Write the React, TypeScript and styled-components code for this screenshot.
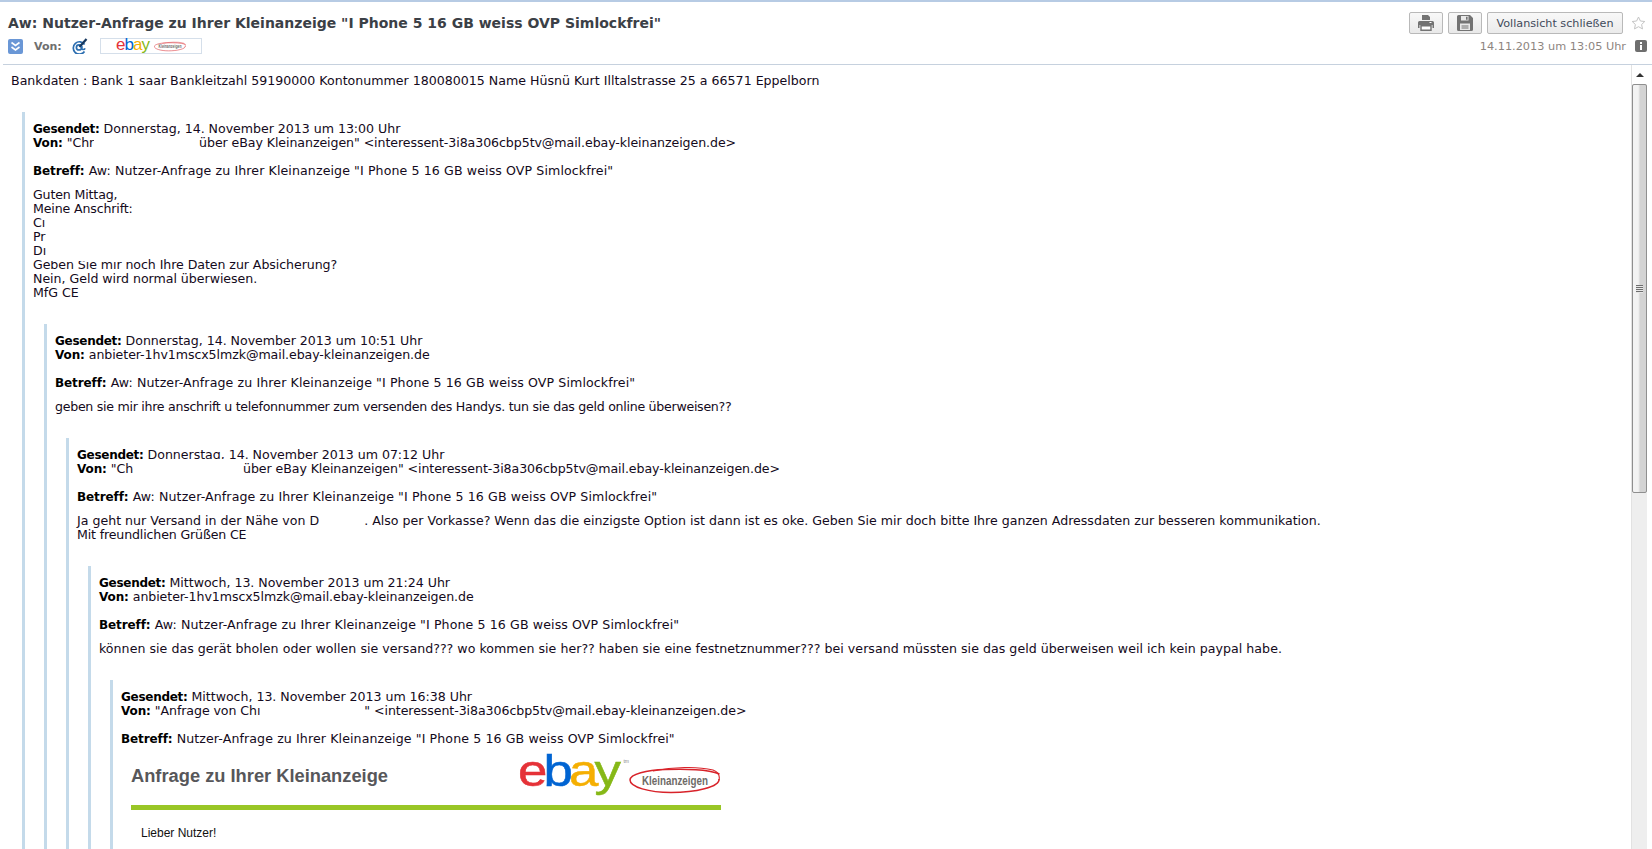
import React from "react";
import styled, { createGlobalStyle } from "styled-components";

const Global = createGlobalStyle`
  html, body { margin: 0; padding: 0; height: 100%; overflow: hidden; background: #fff; }
  #root { height: 100%; }
`;

const Page = styled.div`
  width: 1652px;
  height: 849px;
  display: flex;
  flex-direction: column;
  overflow: hidden;
  background: #fff;
  border-top: 2px solid #b7cbe4;
  box-sizing: border-box;
  font-family: "DejaVu Sans", Verdana, sans-serif;
  color: #111;
`;

const Header = styled.header`
  height: 63px;
  margin-left: 3px;
  padding: 10px 5px 0 5px;
  box-sizing: border-box;
  border-bottom: 1px solid #c6d1de;
  display: flex;
  flex-direction: column;
  flex: none;
`;

const TitleRow = styled.div`
  display: flex;
  align-items: center;
  justify-content: space-between;
  height: 22px;
`;

const Title = styled.h1`
  margin: 0;
  font-size: 14px;
  line-height: 22px;
  font-weight: 700;
  color: #3b4046;
`;

const Actions = styled.div`
  display: flex;
  align-items: center;
  gap: 5px;
  padding-right: 1px;
`;

const IconButton = styled.button`
  width: 34px;
  height: 22px;
  padding: 0;
  display: flex;
  align-items: center;
  justify-content: center;
  border: 1px solid #b9b9b9;
  border-radius: 2px;
  background: linear-gradient(#f8f8f8, #e9e9e9);
`;

const TextButton = styled.button`
  height: 22px;
  width: 136px;
  padding: 0;
  border: 1px solid #b9b9b9;
  border-radius: 2px;
  background: linear-gradient(#f8f8f8, #ebebeb);
  font-family: inherit;
  font-size: 11.2px;
  color: #3f4a5a;
`;

const StarSlot = styled.span`
  width: 16px;
  margin-left: 2px;
  display: flex;
  justify-content: center;
`;

const MetaRow = styled.div`
  display: flex;
  align-items: center;
  justify-content: space-between;
  height: 20px;
  margin-top: 2px;
`;

const Sender = styled.div`
  display: flex;
  align-items: center;
`;

const SenderLabel = styled.span`
  font-size: 11px;
  font-weight: 700;
  color: #6f6f6f;
  margin-left: 11px;
  width: 38px;
`;

const LogoChip = styled.div`
  width: 100px;
  height: 14px;
  margin-left: 12px;
  border: 1px solid #d5dfea;
  display: flex;
  align-items: center;
  justify-content: center;
  gap: 5px;
`;

const ChipWord = styled.span`
  font-family: "Liberation Sans", Arial, sans-serif;
  font-size: 17px;
  line-height: 14px;
  letter-spacing: -1px;
  margin-top: -2px;
  white-space: nowrap;
`;

const Stamp = styled.div`
  display: flex;
  align-items: center;
  gap: 9px;
  font-size: 11.3px;
  color: #8d8580;
`;

const Viewport = styled.div`
  flex: 1;
  min-height: 0;
  display: flex;
`;

const Content = styled.main`
  flex: 1;
  min-width: 0;
  overflow: hidden;
  padding: 9px 0 0 11px;
  font-size: 12.6px;
  line-height: 14px;
  color: #140a20;
`;

const Lead = styled.div`
  height: 14px;
  white-space: nowrap;
`;

const Quote = styled.blockquote`
  margin: 24px 0 0 11px;
  border-left: 3px solid #c4daea;
  padding: 10px 0 14px 8px;
`;

const Meta = styled.div<{ $track?: number }>`
  margin: 0;
  white-space: nowrap;
  letter-spacing: ${p => p.$track ?? 0}px;
`;

const Subject = styled.div`
  margin-top: 14px;
  white-space: nowrap;
  letter-spacing: 0.1px;
`;

const Body = styled.div<{ $track?: number }>`
  margin-top: 10px;
  white-space: nowrap;
  letter-spacing: ${p => p.$track ?? 0}px;
`;

const Label = styled.b<{ $tight?: boolean }>`
  font-weight: 700;
  font-size: 12px;
  letter-spacing: ${p => (p.$tight ? "-0.28px" : "-0.1px")};
  color: #000;
`;

const Redact = styled.span<{ $w: number; $up?: number; $down?: number }>`
  display: inline-block;
  width: ${p => p.$w}px;
  height: 14px;
  vertical-align: top;
  position: relative;
  &::after {
    content: "";
    position: absolute;
    left: 0;
    right: 0;
    top: ${p => -(p.$up ?? 0)}px;
    bottom: ${p => -(p.$down ?? 0)}px;
    background: #fff;
  }
`;

const Inner = styled.section`
  width: 590px;
  margin: 5px 0 0 10px;
  font-family: "Liberation Sans", Arial, sans-serif;
  letter-spacing: 0;
`;

const InnerHead = styled.div`
  height: 54px;
  display: flex;
  justify-content: space-between;
  align-items: flex-start;
`;

const InnerTitle = styled.h2`
  margin: 14px 0 0;
  font-size: 18.3px;
  line-height: 22px;
  font-weight: 700;
  color: #57575a;
`;

const Brand = styled.div`
  display: flex;
  align-items: flex-start;
`;

const EbayWord = styled.div`
  margin-top: -1px;
  font-size: 44px;
  line-height: 42px;
  height: 42px;
  width: 98px;
  letter-spacing: -3.2px;
  white-space: nowrap;
  -webkit-text-stroke: 0.5px currentColor;
  transform: scaleX(1.2);
  transform-origin: left top;
`;

const Tm = styled.span`
  width: 13px;
  margin-top: 7px;
  font-size: 5px;
  line-height: 6px;
  color: #888;
  text-align: right;
`;

const OvalSlot = styled.div`
  margin-top: 15px;
  display: flex;
`;

const Letter = styled.span<{ $c: string }>`
  color: ${p => p.$c};
`;

const Rule = styled.div`
  height: 5px;
  background: #99c626;
`;

const Greeting = styled.p`
  margin: 16px 0 0 10px;
  font-size: 12px;
  line-height: 14px;
  color: #111;
`;

const Scrollbar = styled.aside`
  flex: none;
  width: 16px;
  margin-right: 5px;
  background: #eeeeee;
  border-left: 1px solid #e2e2e2;
  box-sizing: border-box;
  display: flex;
  flex-direction: column;
  align-items: stretch;
`;

const ScrollUp = styled.div`
  height: 19px;
  background: #fff;
  display: flex;
  align-items: center;
  justify-content: center;
`;

const Arrow = styled.span`
  width: 0;
  height: 0;
  border-left: 4px solid transparent;
  border-right: 4px solid transparent;
  border-bottom: 4px solid #333;
`;

const Thumb = styled.div`
  height: 409px;
  border: 1px solid #8f8f8f;
  border-radius: 2px;
  box-sizing: border-box;
  background: linear-gradient(90deg, #f3f3f3 0 40%, #d3d3d3 55% 100%);
  display: flex;
  align-items: center;
  justify-content: center;
`;

const Grip = styled.span`
  width: 7px;
  height: 8px;
  background: repeating-linear-gradient(#6e6e6e 0 1px, #e8e8e8 1px 2px);
`;

const PrintIcon = () => (
  <svg width="16" height="16" viewBox="0 0 16 16" aria-hidden="true">
    <path fill="#737373" d="M4 0h6l2 2v3H4zM1.5 6h13A1.5 1.5 0 0 1 16 7.5V13h-1.5v-3h-13v3H0V7.5A1.5 1.5 0 0 1 1.5 6z" />
    <path fill="#fff" stroke="#737373" strokeWidth="1.4" d="M3 10.7h10v4.6H3z" />
    <path fill="#fff" d="M11.5 7h2v1h-2z" />
  </svg>
);

const SaveIcon = () => (
  <svg width="16" height="16" viewBox="0 0 16 16" aria-hidden="true">
    <path fill="#737373" d="M1.5 0H13l3 3v11.5a1.5 1.5 0 0 1-1.5 1.5h-13A1.5 1.5 0 0 1 0 14.5v-13A1.5 1.5 0 0 1 1.5 0z" />
    <path fill="#e8e8e8" d="M4 1h7.5v4.5H4zM3 8.5h10V15H3z" />
    <path fill="#737373" d="M9 1.7h1.6v3H9zM4.5 10.5h7v1h-7zM4.5 12.5h7v1h-7z" />
  </svg>
);

const StarIcon = () => (
  <svg width="15" height="14" viewBox="0 0 15 14" aria-hidden="true">
    <path fill="#fff" stroke="#c4c4c4" d="M7.5 1l1.9 4 4.4.5-3.2 3 .9 4.4-4-2.2-4 2.2.9-4.4-3.2-3 4.4-.5z" />
  </svg>
);

const ExpandIcon = () => (
  <svg width="15" height="15" viewBox="0 0 15 15" aria-hidden="true">
    <rect width="15" height="15" rx="2" fill="#6a97d6" />
    <path fill="none" stroke="#fff" strokeWidth="1.6" d="M3.5 3.5l4 3 4-3M3.5 8l4 3 4-3" />
  </svg>
);

const AtIcon = () => (
  <svg width="16" height="16" viewBox="0 0 16 16" aria-hidden="true">
    <path fill="none" stroke="#2a6db0" strokeWidth="1.7" d="M12.5 13.6A6.2 6.2 0 1 1 12.6 6.5" />
    <circle cx="7" cy="9.4" r="2.6" fill="none" stroke="#2a6db0" strokeWidth="1.7" />
    <path stroke="#17385f" strokeWidth="2.2" d="M7.5 9L14.5 1" />
    <path fill="none" stroke="#2a6db0" strokeWidth="1.5" d="M9.8 8v2.4c0 1.6 2.6 1.6 3.4 0" />
  </svg>
);

const InfoIcon = () => (
  <svg width="12" height="12" viewBox="0 0 12 12" aria-hidden="true">
    <rect width="12" height="12" rx="2" fill="#6e6e6e" />
    <path fill="#fff" d="M5 2h2v2H5zM5 5h2v5H5z" />
  </svg>
);

const Oval = ({ w, h, label }: { w: number; h: number; label: number }) => (
  <svg width={w} height={h} viewBox="0 0 92 28" style={{ flex: "none" }}>
    <path fill="none" stroke="#d8232a" strokeWidth="1.5" d="M90 13C91 21 66 26.5 42 26.5 20 26.5 1 21 1 14 1 8 18 4 36 3.5 58 3 78 3 90.5 8" />
    <path fill="none" stroke="#d8232a" strokeWidth="1.1" d="M24 5C44 1 68 0 84 4 89 6 91 10 90 14" />
    <text x="46" y="19" textAnchor="middle" fontFamily="Liberation Sans, Arial, sans-serif" fontWeight="700" fontSize={label} fill="#6f6b67" textLength="66" lengthAdjust="spacingAndGlyphs">
      Kleinanzeigen
    </text>
  </svg>
);

const Subj = "Nutzer-Anfrage zu Ihrer Kleinanzeige \"I Phone 5 16 GB weiss OVP Simlockfrei\"";
const EbayColors: [string, string][] = [["e", "#e53238"], ["b", "#0064d2"], ["a", "#f5af02"], ["y", "#86b817"]];

const App = () => (
  <Page>
    <Global />
    <Header>
      <TitleRow>
        <Title>Aw: {Subj}</Title>
        <Actions>
          <IconButton aria-label="Drucken"><PrintIcon /></IconButton>
          <IconButton aria-label="Speichern"><SaveIcon /></IconButton>
          <TextButton>Vollansicht schließen</TextButton>
          <StarSlot><StarIcon /></StarSlot>
        </Actions>
      </TitleRow>
      <MetaRow>
        <Sender>
          <ExpandIcon />
          <SenderLabel>Von:</SenderLabel>
          <AtIcon />
          <LogoChip>
            <ChipWord>
              {EbayColors.map(([l, c]) => <Letter key={l} $c={c}>{l}</Letter>)}
            </ChipWord>
            <Oval w={32} h={11} label={14} />
          </LogoChip>
        </Sender>
        <Stamp>
          14.11.2013 um 13:05 Uhr
          <InfoIcon />
        </Stamp>
      </MetaRow>
    </Header>
    <Viewport>
      <Content>
        <Lead>Bankdaten : Bank 1 saar Bankleitzahl 59190000 Kontonummer 180080015 Name Hüsnü Kurt Illtalstrasse 25 a 66571 Eppelborn</Lead>
        <Quote>
          <Meta $track={-0.03}><Label $tight>Gesendet:</Label> Donnerstag, 14. November 2013 um 13:00 Uhr</Meta>
          <Meta $track={-0.08}><Label>Von:</Label> "Chr<Redact $w={101} /> über eBay Kleinanzeigen" &lt;interessent-3i8a306cbp5tv@mail.ebay-kleinanzeigen.de&gt;</Meta>
          <Subject><Label>Betreff:</Label> Aw: {Subj}</Subject>
          <Body>
            <Meta $track={-0.15}>Guten Mittag,</Meta>
            <Meta $track={-0.15}>Meine Anschrift:</Meta>
            <Meta>Cı<Redact $w={100} /></Meta>
            <Meta>Pr<Redact $w={100} /></Meta>
            <Meta>Dı<Redact $w={100} $down={3} /></Meta>
            <Meta $track={-0.07}>Geben Sie mir noch Ihre Daten zur Absicherung?</Meta>
            <Meta $track={-0.03}>Nein, Geld wird normal überwiesen.</Meta>
            <Meta>MfG CE</Meta>
          </Body>
          <Quote>
            <Meta $track={-0.03}><Label $tight>Gesendet:</Label> Donnerstag, 14. November 2013 um 10:51 Uhr</Meta>
            <Meta $track={-0.08}><Label>Von:</Label> anbieter-1hv1mscx5lmzk@mail.ebay-kleinanzeigen.de</Meta>
            <Subject><Label>Betreff:</Label> Aw: {Subj}</Subject>
            <Body $track={-0.28}>geben sie mir ihre anschrift u telefonnummer zum versenden des Handys. tun sie das geld online überweisen??</Body>
            <Quote>
              <Meta $track={-0.03}><Label $tight>Gesendet:</Label> Donnerstag, 14. November 2013 um 07:12 Uhr</Meta>
              <Meta $track={-0.08}><Label>Von:</Label> "Ch<Redact $w={106} $up={3} /> über eBay Kleinanzeigen" &lt;interessent-3i8a306cbp5tv@mail.ebay-kleinanzeigen.de&gt;</Meta>
              <Subject><Label>Betreff:</Label> Aw: {Subj}</Subject>
              <Body>
                <Meta>Ja geht nur Versand in der Nähe von D<Redact $w={45} />. Also per Vorkasse? Wenn das die einzigste Option ist dann ist es oke. Geben Sie mir doch bitte Ihre ganzen Adressdaten zur besseren kommunikation.</Meta>
                <Meta $track={-0.15}>Mit freundlichen Grüßen CE</Meta>
              </Body>
              <Quote>
                <Meta $track={-0.03}><Label $tight>Gesendet:</Label> Mittwoch, 13. November 2013 um 21:24 Uhr</Meta>
                <Meta $track={-0.08}><Label>Von:</Label> anbieter-1hv1mscx5lmzk@mail.ebay-kleinanzeigen.de</Meta>
                <Subject><Label>Betreff:</Label> Aw: {Subj}</Subject>
                <Body $track={0.03}>können sie das gerät bholen oder wollen sie versand??? wo kommen sie her?? haben sie eine festnetznummer??? bei versand müssten sie das geld überweisen weil ich kein paypal habe.</Body>
                <Quote>
                  <Meta $track={-0.03}><Label $tight>Gesendet:</Label> Mittwoch, 13. November 2013 um 16:38 Uhr</Meta>
                  <Meta $track={-0.08}><Label>Von:</Label> "Anfrage von Chı<Redact $w={104} />" &lt;interessent-3i8a306cbp5tv@mail.ebay-kleinanzeigen.de&gt;</Meta>
                  <Subject><Label>Betreff:</Label> {Subj}</Subject>
                  <Inner>
                    <InnerHead>
                      <InnerTitle>Anfrage zu Ihrer Kleinanzeige</InnerTitle>
                      <Brand>
                        <EbayWord>
                          {EbayColors.map(([l, c]) => <Letter key={l} $c={c}>{l}</Letter>)}
                        </EbayWord>
                        <Tm>tm</Tm>
                        <OvalSlot><Oval w={92} h={28} label={13} /></OvalSlot>
                      </Brand>
                    </InnerHead>
                    <Rule />
                    <Greeting>Lieber Nutzer!</Greeting>
                  </Inner>
                </Quote>
              </Quote>
            </Quote>
          </Quote>
        </Quote>
      </Content>
      <Scrollbar>
        <ScrollUp><Arrow /></ScrollUp>
        <Thumb><Grip /></Thumb>
      </Scrollbar>
    </Viewport>
  </Page>
);

export default App;
